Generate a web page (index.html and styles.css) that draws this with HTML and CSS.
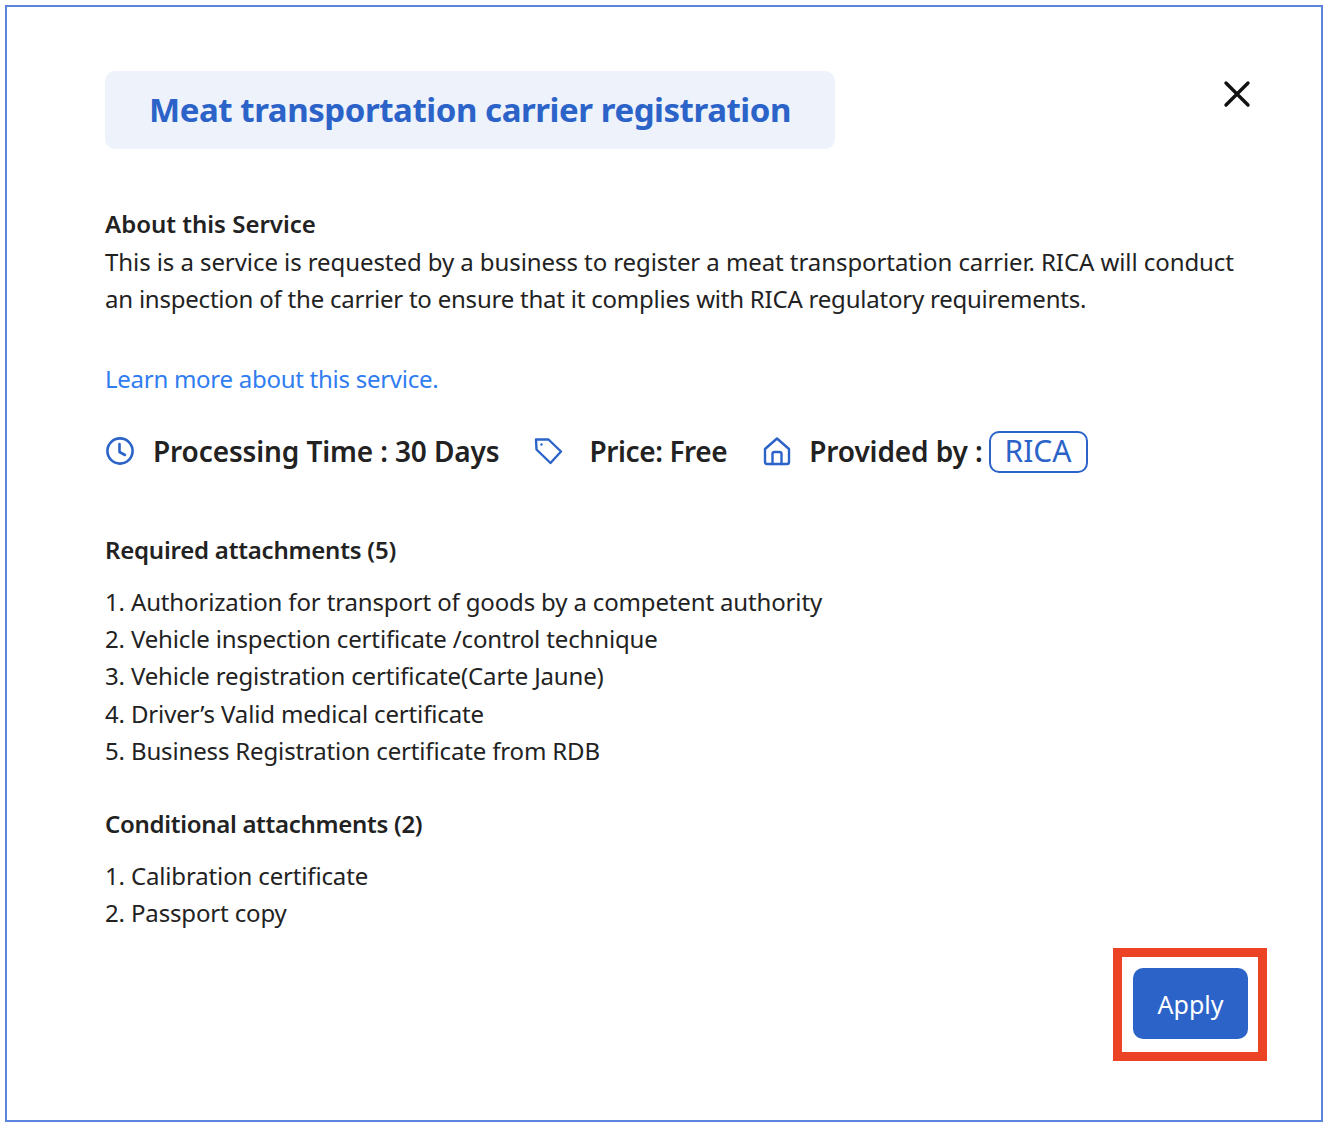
FILE: index.html
```html
<!DOCTYPE html>
<html>
<head>
    <title>Meat transportation carrier registration</title>
    <link rel="stylesheet" href="styles.css">
</head>
<body>
    <div class="modal">
        <div class="top">
            <h1 class="title">Meat transportation carrier registration</h1>
            <button class="close">
                <svg width="28" height="28" viewBox="0 0 28 28"><path d="M3 3 L25 25 M25 3 L3 25" fill="none" stroke="#111" stroke-width="3.4" stroke-linecap="round"/></svg>
            </button>
        </div>

        <h2 class="sub about">About this Service</h2>
        <p class="desc">
            <span class="desc-first">This is a service is requested by a business to register a meat transportation carrier. RICA will conduct</span>
            <span class="desc-second">an inspection of the carrier to ensure that it complies with RICA regulatory requirements.</span>
        </p>
        <a class="learn" href="#">Learn more about this service.</a>

        <div class="meta">
            <svg class="icon clock" width="30" height="30" viewBox="0 0 30 30"><g fill="none" stroke="#2b63c9" stroke-width="2.6" stroke-linecap="round" stroke-linejoin="round"><circle cx="15" cy="15" r="12.6"/><path d="M14.5 8 V16 L20 19"/></g></svg>
            <span class="meta-text time">Processing Time : 30 Days</span>
            <svg class="icon tag" width="30" height="30" viewBox="0 0 30 30"><g fill="none" stroke="#2b63c9" stroke-width="2.4" stroke-linejoin="round"><path d="M3 3.5 H15.5 L28 15.5 L17.5 27 L3.5 13.5 Z"/></g><circle cx="8.5" cy="8.5" r="1.2" fill="#2b63c9"/></svg>
            <span class="meta-text price">Price: Free</span>
            <svg class="icon house" width="30" height="30" viewBox="0 0 30 30"><g fill="none" stroke="#2b63c9" stroke-width="2.4" stroke-linecap="round" stroke-linejoin="round"><path d="M3 13 L15 2.5 L27 13 V26 Q27 28 25 28 H5 Q3 28 3 26 Z"/><path d="M10.5 28 V18 Q10.5 16 12.5 16 H17.5 Q19.5 16 19.5 18 V28"/></g></svg>
            <span class="meta-text provider">Provided by :</span>
            <span class="badge">RICA</span>
        </div>

        <h2 class="sub required">Required attachments (5)</h2>
        <ol class="files">
            <li>Authorization for transport of goods by a competent authority</li>
            <li>Vehicle inspection certificate /control technique</li>
            <li>Vehicle registration certificate(Carte Jaune)</li>
            <li>Driver’s Valid medical certificate</li>
            <li>Business Registration certificate from RDB</li>
        </ol>

        <h2 class="sub conditional">Conditional attachments (2)</h2>
        <ol class="files">
            <li>Calibration certificate</li>
            <li>Passport copy</li>
        </ol>

        <div class="actions">
            <div class="highlight">
                <button class="apply">Apply</button>
            </div>
        </div>
    </div>
</body>
</html>
```

FILE: styles.css
```css
body{
    margin: 0;
    background-color: white;
    color: #222;
    font-family: "Noto Sans", sans-serif;
    font-size: 24px;
}

.modal{
    box-sizing: border-box;
    width: 1318px;
    height: 1117px;
    margin: 5px 0 0 5px;
    border: 2px solid #5b85dc;
    padding: 64px 0 0 98px;
}

.top{
    display: flex;
    justify-content: space-between;
    align-items: flex-start;
}

.title{
    width: 730px;
    height: 78px;
    box-sizing: border-box;
    margin: 0;
    padding-left: 44px;
    border-radius: 10px;
    background-color: #edf2fb;
    color: #2b63c9;
    font-size: 33px;
    font-weight: 700;
    letter-spacing: -0.44px;
    line-height: 78px;
    white-space: nowrap;
}

.close{
    width: 28px;
    height: 28px;
    margin: 9px 70px 0 0;
    padding: 0;
    border: none;
    background: none;
    cursor: pointer;
}

.sub{
    margin: 0;
    font-size: 24px;
    font-weight: 600;
    letter-spacing: -0.3px;
    line-height: 38px;
}

.about{
    margin-top: 56px;
    letter-spacing: 0;
}

.desc{
    margin: 0;
    line-height: 37px;
}

.desc-first,
.desc-second{
    display: block;
    white-space: nowrap;
}

.desc-first{
    letter-spacing: -0.075px;
}

.desc-second{
    letter-spacing: -0.22px;
}

.learn{
    display: block;
    margin-top: 43px;
    color: #2f7df0;
    letter-spacing: -0.27px;
    line-height: 38px;
    text-decoration: none;
}

.meta{
    display: flex;
    align-items: center;
    height: 42px;
    margin-top: 32px;
}

.meta-text{
    font-size: 28px;
    font-weight: 600;
    letter-spacing: -0.12px;
    white-space: nowrap;
}

.icon{
    flex-shrink: 0;
}

.time{
    margin-left: 18px;
}

.tag{
    margin-left: 34px;
}

.price{
    margin-left: 26px;
    letter-spacing: -0.4px;
}

.house{
    margin-left: 35px;
}

.provider{
    margin-left: 17px;
}

.badge{
    box-sizing: border-box;
    width: 99px;
    height: 42px;
    margin: 2px 0 0 6px;
    border: 2px solid #2b63c9;
    border-radius: 10px;
    color: #2b63c9;
    font-size: 30px;
    line-height: 36px;
    text-align: center;
}

.required{
    margin-top: 59px;
    letter-spacing: -0.22px;
}

.files{
    margin: 13.5px 0 0 0;
    padding: 0;
    list-style-position: inside;
    letter-spacing: -0.15px;
    line-height: 37.4px;
}

.conditional{
    margin-top: 35.5px;
}

.actions{
    display: flex;
    justify-content: flex-end;
    margin: 17px 54px 0 0;
}

.highlight{
    box-sizing: border-box;
    width: 154px;
    height: 113px;
    padding: 11px 11px;
    border: 9px solid #ec4225;
}

.apply{
    width: 115px;
    height: 71px;
    border: none;
    border-radius: 10px;
    background-color: #2b63c9;
    color: white;
    font-family: inherit;
    font-size: 25px;
    cursor: pointer;
}
```
